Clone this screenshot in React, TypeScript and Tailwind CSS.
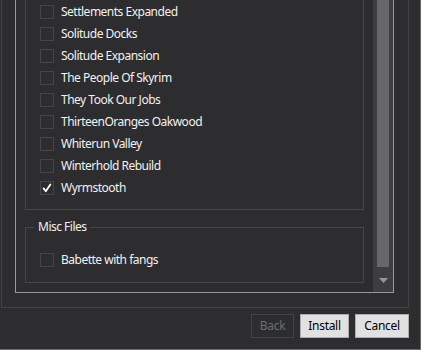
import React from "react";

const items: { label: string; checked: boolean }[] = [
  { label: "Settlements Expanded", checked: false },
  { label: "Solitude Docks", checked: false },
  { label: "Solitude Expansion", checked: false },
  { label: "The People Of Skyrim", checked: false },
  { label: "They Took Our Jobs", checked: false },
  { label: "ThirteenOranges Oakwood", checked: false },
  { label: "Whiterun Valley", checked: false },
  { label: "Winterhold Rebuild", checked: false },
  { label: "Wyrmstooth", checked: true },
];

function Row({ label, checked }: { label: string; checked: boolean }) {
  return (
    <div className="h-[22px] flex items-center shrink-0">
      <div className="w-[14px] h-[14px] border border-[#45454a] shrink-0 flex items-center justify-center">
        {checked && (
          <svg width="12" height="12" viewBox="0 0 12 12">
            <path d="M2.6 6.4 L4.8 9.2 L9.4 2.4" fill="none" stroke="#ffffff" strokeWidth="1.8" strokeLinecap="round" strokeLinejoin="round" />
          </svg>
        )}
      </div>
      <span className="ml-[7px] text-[12px] leading-[16px] tracking-[-0.5px] text-[#f1f1f1] whitespace-nowrap">{label}</span>
    </div>
  );
}

export default function App() {
  return (
    <div
      className="w-[421px] h-[350px] overflow-hidden bg-[#2d2d30] border-r border-b border-[#6a6a6a] flex flex-col"
      style={{ fontFamily: '"Noto Sans", "Open Sans", sans-serif' }}
    >
      <div className="ml-[1px] w-[408px] -mt-[40px] shrink-0 border border-[#434346] pt-[13px] pl-[13px] pr-[14px] pb-[14px]">
        <div className="border border-[#999999] flex">
          <div className="flex-1 pt-[9px] px-[9px] pb-[9px] flex flex-col">
            <div className="border border-[#45454a] pt-[16px] pl-[14px] pb-[10px] flex flex-col shrink-0">
              {items.map((it) => (
                <Row key={it.label} label={it.label} checked={it.checked} />
              ))}
            </div>
            <div className="relative mt-[17px] border border-[#45454a] pt-[21px] pl-[14px] pb-[11px] flex flex-col shrink-0">
              <span className="absolute -top-[9px] left-[9px] px-[3px] bg-[#2d2d30] text-[12px] leading-[16px] tracking-[-0.5px] text-[#f1f1f1] whitespace-nowrap">
                Misc Files
              </span>
              <Row label="Babette with fangs" checked={false} />
            </div>
          </div>
          <div className="w-[20px] bg-[#3e3e42] flex flex-col shrink-0">
            <div className="flex-1 mx-[4px] bg-[#686868]" />
            <div className="h-[25px] flex justify-center pt-[11px]">
              <svg width="9" height="5" viewBox="0 0 9 5">
                <polygon points="0,0 9,0 4.5,5" fill="#999999" />
              </svg>
            </div>
          </div>
        </div>
      </div>
      <div className="mt-[6px] flex justify-end gap-[6px] pr-[11px] shrink-0">
        <button className="w-[43px] h-[24px] border border-[#434346] bg-[#2d2d30] text-[12px] tracking-[-0.3px] text-[#6d6d6d]">
          Back
        </button>
        <button className="w-[49px] h-[24px] border border-[#adadad] bg-[#e1e1e1] text-[12px] tracking-[-0.3px] text-[#000000]">
          Install
        </button>
        <button className="w-[54px] h-[24px] border border-[#adadad] bg-[#e1e1e1] text-[12px] tracking-[-0.3px] text-[#000000]">
          Cancel
        </button>
      </div>
    </div>
  );
}
